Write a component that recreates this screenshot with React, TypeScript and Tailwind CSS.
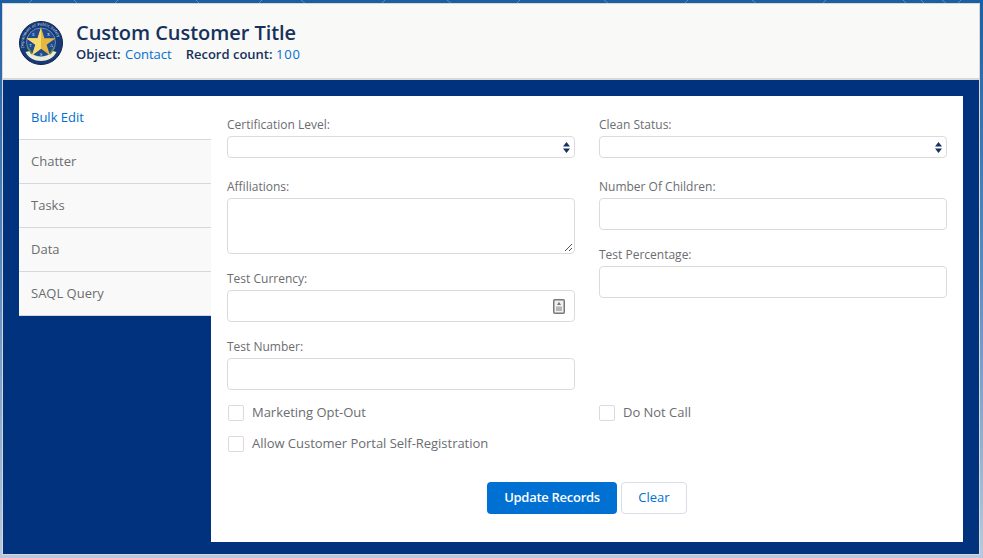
const font = "font-['Open_Sans',sans-serif]";

const tabs = ["Bulk Edit", "Chatter", "Tasks", "Data", "SAQL Query"];

function Seal() {
	return (
		<svg width="44" height="44" viewBox="0 0 44 44" className="mt-[3px] shrink-0">
			<circle cx="22" cy="22" r="21.5" fill="#173a78" stroke="#0f2450" strokeWidth="1" />
			<defs>
				<path id="seal-ring" d="M5.2 27 A17.5 17.5 0 1 1 38.8 27" />
			</defs>
			<text fontSize="4.4" fill="#dfe4ea" fontFamily="Liberation Serif, serif">
				<textPath href="#seal-ring" textLength="54">
					Department of Public Safety
				</textPath>
			</text>
			<circle cx="22" cy="21.5" r="14.5" fill="#1d4a90" stroke="#c9d3de" strokeWidth="0.5" />
			<path d="M6.5 31 C12 43 32 43 37.5 31 L33.5 30 C29 37.5 15 37.5 10.5 30 Z" fill="#ecebd6" />
			<path d="M8.5 26 L13 33 M35.5 26 L31 33" stroke="#5f8a4c" strokeWidth="1.6" />
			<path
				d="M22 6.5 L25.4 17.2 L36.5 17.2 L27.6 23.8 L31 34.2 L22 27.8 L13 34.2 L16.4 23.8 L7.5 17.2 L18.6 17.2 Z"
				fill="#e6b83f"
			/>
			<path d="M22 6.5 L22 27.8 L13 34.2 L16.4 23.8 L7.5 17.2 L18.6 17.2 Z" fill="#f7da72" />
			<g fontSize="4" fill="#eef1f4" fontFamily="Liberation Serif, serif" textAnchor="middle">
				<text x="14.5" y="15">E</text>
				<text x="29.5" y="15">X</text>
				<text x="11.5" y="26">T</text>
				<text x="32.5" y="26">A</text>
				<text x="22" y="34.5">S</text>
			</g>
		</svg>
	);
}

function Field({ label, className = "", children }: { label: string; className?: string; children: React.ReactNode }) {
	return (
		<div className={className}>
			<div className="h-[20px] text-[12px] leading-[18px] text-[#6b6d70]">{label}</div>
			{children}
		</div>
	);
}

function Select() {
	return (
		<div className="flex h-[22px] items-center justify-end rounded-[4px] border border-[#dddbda] bg-white pr-[4px]">
			<svg width="7" height="11" viewBox="0 0 7 11">
				<path d="M3.5 0 L7 4.6 L0 4.6 Z M0 6.4 L7 6.4 L3.5 11 Z" fill="#16325c" />
			</svg>
		</div>
	);
}

function Input() {
	return <div className="h-[32px] rounded-[4px] border border-[#dddbda] bg-white" />;
}

function Check({ label }: { label: string }) {
	return (
		<div className="flex h-4 items-center gap-2">
			<span className="h-4 w-4 rounded-[2px] border border-[#dddbda] bg-white" />
			<span className="text-[13px] tracking-[-0.03px] text-[#6b6d70]">{label}</span>
		</div>
	);
}

export default function App() {
	return (
		<main
			className={`${font} relative h-[558px] w-[983px] overflow-hidden bg-gradient-to-b from-[#1b5fa3] via-[#5e8cbd] to-[#b9c9dc] pl-[2px] pr-[3px] pt-[3px]`}
		>
			{/* faint pattern of the page background, only the top strip shows */}
			<svg width="983" height="4" viewBox="0 0 983 4" className="absolute left-0 top-0">
				<path
					d="M32 0 L28 4 M74 0 L78 4 M118 0 L114 4 M196 0 L200 4 M262 0 L258 4 M301 0 L306 4 M385 0 L381 4 M447 0 L452 4 M520 0 L516 4 M604 0 L609 4 M688 0 L684 4 M752 0 L757 4 M826 0 L822 4 M903 0 L907 4 M921 0 L925 4 M942 0 L947 4 M961 0 L957 4"
					stroke="#ffffff"
					strokeOpacity="0.28"
					strokeWidth="1"
				/>
			</svg>
			<div className="relative h-[552px] border border-[#d8d8d8]">
				<header className="flex h-[76px] items-center gap-[13px] border-b-2 border-[#d8d8d8] bg-[#f9f9f7] pl-[16px] pt-[1px]">
					<Seal />
					<div>
						<h1 className="text-[20px] font-semibold leading-[25px] tracking-[-0.05px] text-[#16325c]">
							Custom Customer Title
						</h1>
						<p className="text-[13px] leading-[18px] text-[#16325c]">
							<span className="mr-[1px] font-semibold">Object: </span>
							<span className="text-[#0070d2]">Contact</span>
							<span className="ml-[14px] font-semibold">Record count: </span>
							<span className="tracking-[0.8px] text-[#0070d2]">100</span>
						</p>
					</div>
				</header>

				<div className="flex h-[474px] items-start bg-[#00327d] p-4">
					<nav className="w-[192px] shrink-0 text-[13px]">
						{tabs.map((tab, i) => (
							<div
								key={tab}
								className={
									i === 0
										? "flex h-[44px] items-center border-b border-[#d8d8d8] bg-white pl-3 text-[#0070d2]"
										: "flex h-[44px] items-center border-b border-[#d8d8d8] bg-[#f9f9f9] pl-3 text-[#6b6d70]"
								}
							>
								{tab}
							</div>
						))}
					</nav>

					<section className="h-[446px] flex-1 bg-white px-4 pt-5">
						<div className="grid grid-cols-2 gap-x-6">
							<div>
								<Field label="Certification Level:">
									<Select />
								</Field>
								<Field label="Affiliations:" className="mt-5">
									<div className="relative h-[56px] rounded-[4px] border border-[#dddbda] bg-white">
										<svg width="9" height="9" viewBox="0 0 9 9" className="absolute bottom-[1px] right-[1px]">
											<path d="M1 8 L8 1 M5 8 L8 5" stroke="#555" strokeWidth="1" />
										</svg>
									</div>
								</Field>
								<Field label="Test Currency:" className="mt-4">
									<div className="flex h-[32px] items-center justify-end rounded-[4px] border border-[#dddbda] bg-white pr-[9px]">
										<svg width="12" height="15" viewBox="0 0 12 15">
											<rect x="0.75" y="0.75" width="10.5" height="13.5" rx="1" fill="#f1f1f1" stroke="#77797c" strokeWidth="1.5" />
											<path d="M6 2.8 L8 6 L4 6 Z" fill="#77797c" />
											<rect x="3" y="7.5" width="6" height="4.5" fill="#b5b6b8" />
										</svg>
									</div>
								</Field>
								<Field label="Test Number:" className="mt-4">
									<Input />
								</Field>
							</div>
							<div>
								<Field label="Clean Status:">
									<Select />
								</Field>
								<Field label="Number Of Children:" className="mt-5">
									<Input />
								</Field>
								<Field label="Test Percentage:" className="mt-4">
									<Input />
								</Field>
							</div>
						</div>

						<div className="mt-[15px] grid grid-cols-2 gap-x-6">
							<div className="flex flex-col gap-[15px] pl-[1px]">
								<Check label="Marketing Opt-Out" />
								<Check label="Allow Customer Portal Self-Registration" />
							</div>
							<div>
								<Check label="Do Not Call" />
							</div>
						</div>

						<div className="mt-[30px] flex justify-center gap-1">
							<button
								type="button"
								className="h-[32px] w-[130px] rounded-[4px] bg-[#0070d2] text-[13px] font-semibold tracking-[-0.28px] text-white"
							>
								Update Records
							</button>
							<button
								type="button"
								className="h-[32px] w-[66px] rounded-[4px] border border-[#d8dde6] bg-white text-[13px] text-[#0070d2]"
							>
								Clear
							</button>
						</div>
					</section>
				</div>
			</div>
		</main>
	);
}
